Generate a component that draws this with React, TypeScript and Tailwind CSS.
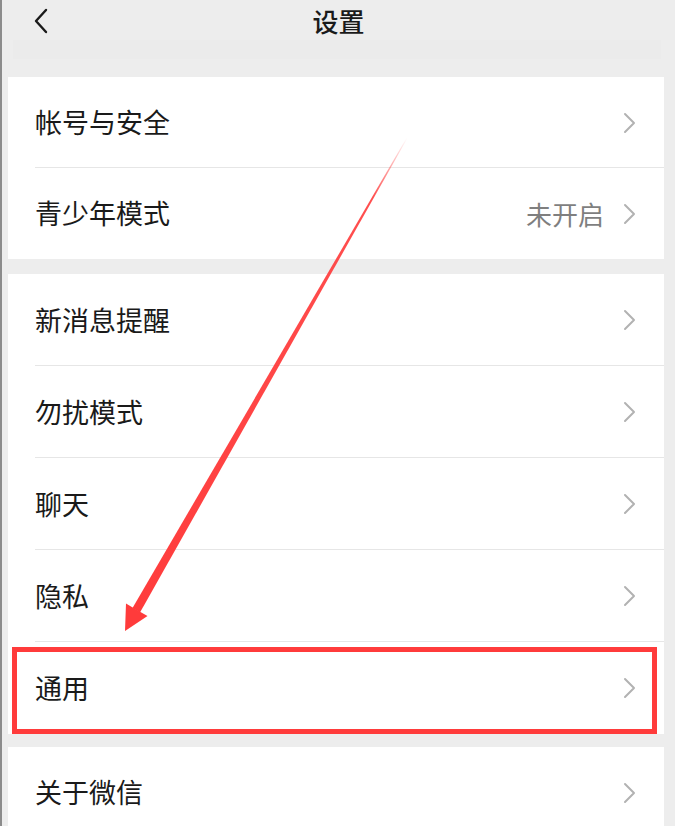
import React from "react";

type Row = { label: string; value?: string };

const groups: { h: string; rows: Row[] }[] = [
  { h: "h-[91px]", rows: [{ label: "帐号与安全" }, { label: "青少年模式", value: "未开启" }] },
  {
    h: "h-[92px]",
    rows: [
      { label: "新消息提醒" },
      { label: "勿扰模式" },
      { label: "聊天" },
      { label: "隐私" },
      { label: "通用" },
    ],
  },
  { h: "h-[91px]", rows: [{ label: "关于微信" }] },
];

function Chevron() {
  return (
    <svg width="13" height="22" viewBox="0 0 13 22" fill="none">
      <polyline points="2,2 11,11 2,20" stroke="#b2b2b2" strokeWidth="2" strokeLinecap="round" strokeLinejoin="round" />
    </svg>
  );
}

function SettingRow({ row, last, h }: { row: Row; last: boolean; h: string }) {
  return (
    <div className={`relative flex items-center pl-[27px] pr-[28px] ${h}`}>
      <span className="flex-1 text-[27px] text-[#1a1a1a]">{row.label}</span>
      {row.value && <span className="mr-[19px] text-[26px] text-[#7f7f7f]">{row.value}</span>}
      <Chevron />
      {!last && <div className="absolute bottom-0 left-[27px] right-0 h-px bg-[#e6e6e6]" />}
    </div>
  );
}

function Arrow() {
  return (
    <svg className="pointer-events-none absolute left-0 top-0" width="675" height="826" viewBox="0 0 675 826">
      <defs>
        <linearGradient id="fade" x1="405" y1="138" x2="123" y2="631" gradientUnits="userSpaceOnUse">
          <stop offset="0" stopColor="#ff3b3b" stopOpacity="0" />
          <stop offset="0.12" stopColor="#ff3b3b" stopOpacity="0.9" />
          <stop offset="1" stopColor="#ff3b3b" />
        </linearGradient>
      </defs>
      <polygon points="405.4,138.2 404.6,137.8 130.5,608 138,612.5" fill="url(#fade)" />
      <polygon points="123,631 124,603.5 134,609.5 145.5,616" fill="#ff3b3b" />
    </svg>
  );
}

export default function App() {
  return (
    <div
      className="relative h-[826px] w-[675px] overflow-hidden border-l-2 border-[#8c8c8c] bg-[#ededed]"
      style={{ fontFamily: '"Noto Sans CJK SC", "Noto Sans", sans-serif' }}
    >
      <div className="relative h-[77px]">
        <div className="absolute left-[11px] right-[14px] top-[40px] h-[19px] bg-[#ebebeb]" />
        <div className="relative flex h-[41px] items-center justify-center">
          <svg className="absolute left-[31px] top-[8px]" width="16" height="26" viewBox="0 0 16 26" fill="none">
            <polyline points="13,2 3,13 13,24" stroke="#1a1a1a" strokeWidth="2.4" strokeLinecap="round" strokeLinejoin="round" />
          </svg>
          <span className="text-[26px] font-medium text-[#1a1a1a]">设置</span>
        </div>
      </div>

      <div className="ml-[6px] mr-[11px] flex flex-col">
        {groups.map((g, gi) => (
          <div key={gi} className={`bg-white ${gi === 1 ? "mt-[15px]" : gi === 2 ? "mt-[13px]" : ""}`}>
            {g.rows.map((row, ri) => (
              <SettingRow key={row.label} row={row} h={g.h} last={ri === g.rows.length - 1} />
            ))}
          </div>
        ))}
      </div>

      <div className="absolute left-[10px] top-[647px] h-[87px] w-[645px] border-[5px] border-[#ff3b3b]" />
      <Arrow />
    </div>
  );
}
